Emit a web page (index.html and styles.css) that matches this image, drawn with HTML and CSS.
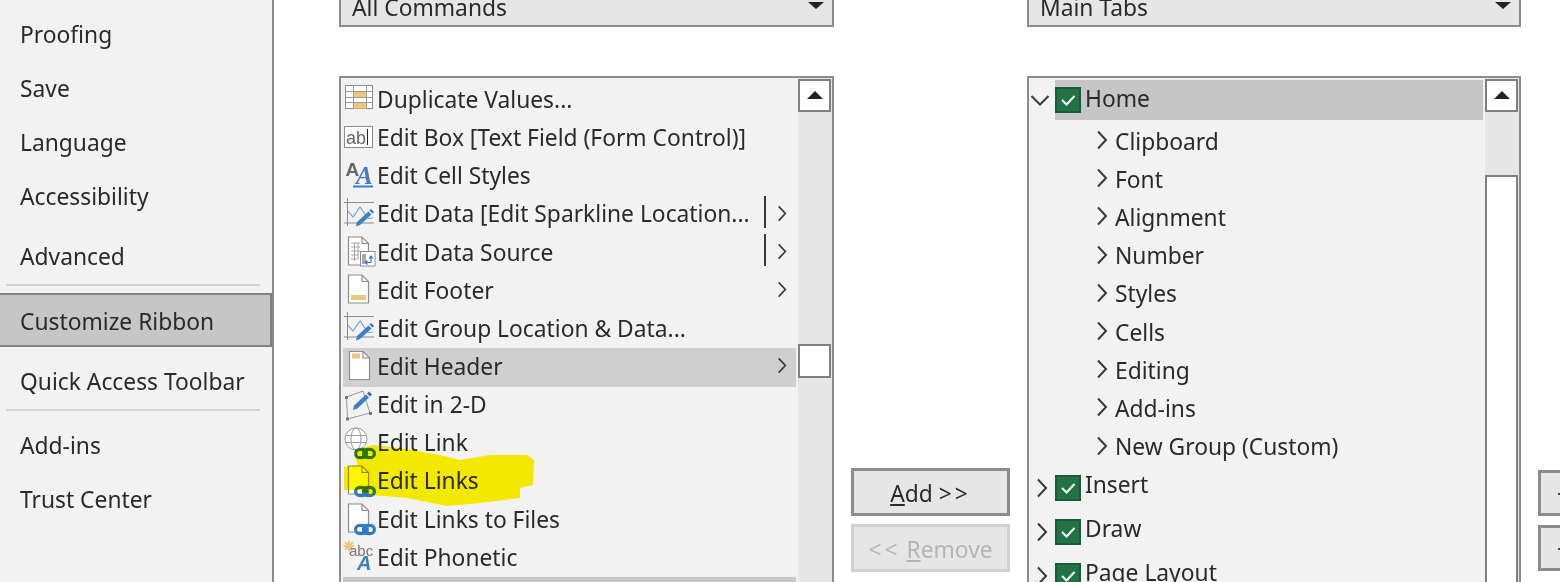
FILE: index.html
```html
<!DOCTYPE html>
<html lang="en">
<head>
<meta charset="utf-8">
<title>Customize Ribbon</title>
<link rel="stylesheet" href="styles.css">
</head>
<body>
<svg class="defs" width="0" height="0" aria-hidden="true">
  <defs>
    <symbol id="chev-r" viewBox="0 0 12 20"><path d="M2 1.500 10 10 2 18.500" fill="none" stroke="#3a3a3a" stroke-width="2"/></symbol>
    <symbol id="chev-d" viewBox="0 0 20 12"><path d="M1.500 2 10 10.500 18.500 2" fill="none" stroke="#3a3a3a" stroke-width="2"/></symbol>
    <symbol id="check" viewBox="0 0 26 26"><rect x="1" y="1" width="24" height="24" fill="#217346" stroke="#185c37" stroke-width="2"/><path d="M7 13 11.500 17.500 19.500 9" fill="none" stroke="#fff" stroke-width="2"/></symbol>
    <symbol id="page" viewBox="0 0 32 38"><path d="M4.500 3H18L24.500 9.500V31H4.500Z" fill="#fff" stroke="#8c8c8c" stroke-width="1.200"/><path d="M18 3V9.500H24.500" fill="none" stroke="#8c8c8c" stroke-width="1.200"/></symbol>
    <symbol id="spark" viewBox="0 0 32 38"><path d="M3.500 2V30M0 6.500H30M0 27H30" stroke="#8a8a8a" stroke-width="1" fill="none"/><path d="M3.500 14.500 9 21 16 11 24 22.500 29 22" fill="none" stroke="#6fa0d4" stroke-width="1.100"/><path d="M12 30.500 13 26 24.500 15.500 27.500 18.500 16 29Z" fill="#3f7fc1"/><path d="M25.500 14.500 27 13 30 16 28.500 17.500Z" fill="#2f6fb5"/></symbol>
    <symbol id="chain" viewBox="0 0 22 12"><rect x="1.600" y="1.800" width="11" height="8.400" rx="4.200" fill="none" stroke="#2f7ac4" stroke-width="3.200"/><rect x="9.400" y="1.800" width="11" height="8.400" rx="4.200" fill="none" stroke="#2f7ac4" stroke-width="3.200"/></symbol>
  </defs>
</svg>
<div class="app">
  <nav class="sidebar">
    <div class="nav-item">Proofing</div>
    <div class="nav-item">Save</div>
    <div class="nav-item">Language</div>
    <div class="nav-item">Accessibility</div>
    <div class="nav-item nav-gap">Advanced</div>
    <div class="nav-sep"></div>
    <div class="nav-item nav-selected">Customize Ribbon</div>
    <div class="nav-item">Quick Access Toolbar</div>
    <div class="nav-sep nav-sep-tight"></div>
    <div class="nav-item">Add-ins</div>
    <div class="nav-item">Trust Center</div>
  </nav>
  <main class="main">
    <div class="dropdown"><span>All Commands</span><i class="tri-down"></i></div>
    <div></div>
    <div class="dropdown dropdown-right"><span>Main Tabs</span><i class="tri-down"></i></div>
    <div></div>

    <section class="panel">
      <div class="rows">
        <div class="row"><svg class="ico" viewBox="0 0 32 38"><rect x="1.500" y="4.500" width="27" height="23" fill="#fff" stroke="#8c8c8c"/><rect x="9.500" y="11" width="13" height="5.500" fill="#ecc67c"/><rect x="9.500" y="22" width="13" height="5.500" fill="#ecc67c"/><path d="M1.500 10.500H28.500M1.500 16.500H28.500M1.500 21.500H28.500M9.500 4.500V27.500M22.500 4.500V27.500" stroke="#9a9a9a" fill="none"/></svg><span class="label">Duplicate Values...</span></div>
        <div class="row"><svg class="ico" viewBox="0 0 32 38"><rect x="0.500" y="6.500" width="28" height="21" fill="#fff" stroke="#8c8c8c"/><text x="2" y="23.500" class="ico-ab">ab</text><path d="M23.500 9V25" stroke="#222" stroke-width="1"/></svg><span class="label">Edit Box [Text Field (Form Control)]</span></div>
        <div class="row"><svg class="ico" viewBox="0 0 32 38"><text x="1.500" y="17.500" class="ico-a">A</text><text x="12" y="26" class="ico-a-blue">A</text><path d="M9 28.500H29" stroke="#3f7fc1" stroke-width="2"/></svg><span class="label">Edit Cell Styles</span></div>
        <div class="row"><svg class="ico" viewBox="0 0 32 38"><use href="#spark" width="32" height="38"/></svg><span class="label label-cut">Edit Data [Edit Sparkline Location...</span><i class="split"></i><svg class="sub"><use href="#chev-r"/></svg></div>
        <div class="row"><svg class="ico" viewBox="0 0 32 38"><use href="#page" width="32" height="38"/><path d="M7 9H16M7 13H16M7 17H16M7 21H14M7 25H14M10.500 9V27M14 9V25" stroke="#a5a5a5" fill="none"/><rect x="16.500" y="17.500" width="14.500" height="14.500" fill="#fff" stroke="#8c8c8c"/><rect x="18" y="20" width="4" height="10" fill="#a9a9a9"/><path d="M21.500 28.500H27V22.500M25 24.500 27 22 29 24.500M23.500 26.500 21.500 28.500 23.500 30.500" stroke="#2f7ac4" stroke-width="1.200" fill="none"/></svg><span class="label">Edit Data Source</span><i class="split"></i><svg class="sub"><use href="#chev-r"/></svg></div>
        <div class="row"><svg class="ico" viewBox="0 0 32 38"><use href="#page" width="32" height="38"/><rect x="7" y="23" width="15" height="5" fill="#ecc67c"/></svg><span class="label">Edit Footer</span><svg class="sub"><use href="#chev-r"/></svg></div>
        <div class="row"><svg class="ico" viewBox="0 0 32 38"><use href="#spark" width="32" height="38"/></svg><span class="label">Edit Group Location &amp; Data...</span></div>
        <div class="row row-hover"><svg class="ico" viewBox="0 0 32 38"><use href="#page" x="1" y="0.500" width="32" height="38"/><rect x="8" y="5.500" width="8" height="5" fill="#ecc67c"/></svg><span class="label">Edit Header</span><svg class="sub"><use href="#chev-r"/></svg></div>
        <div class="row"><svg class="ico" viewBox="0 0 32 38"><path d="M2.500 10 19 4 26 26 3.500 32Z" fill="none" stroke="#9a9a9a" stroke-width="1"/><rect x="1" y="9" width="3" height="3" fill="#777"/><rect x="2" y="30.500" width="3" height="3" fill="#777"/><rect x="25" y="25" width="3" height="3" fill="#777"/><path d="M9 23 10 18.500 22 7.500 25 10.500 13.500 21.500Z" fill="#3f7fc1"/><path d="M23 6.500 25 4.500 28 7.500 26 9.500Z" fill="#2f6fb5"/></svg><span class="label">Edit in 2-D</span></div>
        <div class="row"><svg class="ico" viewBox="0 0 32 38"><circle cx="12" cy="14" r="11" fill="#fff" stroke="#9a9a9a" stroke-width="1"/><ellipse cx="12" cy="14" rx="5" ry="11" fill="none" stroke="#9a9a9a"/><path d="M1.500 10.500H22.500M1.500 17.500H22.500" stroke="#9a9a9a" fill="none"/><use href="#chain" x="10" y="22.500" width="22" height="12"/></svg><span class="label">Edit Link</span></div>
        <div class="row"><svg class="ico" viewBox="0 0 32 38"><use href="#page" width="32" height="38"/><use href="#chain" x="10" y="22.500" width="22" height="12"/></svg><span class="label">Edit Links</span></div>
        <div class="row"><svg class="ico" viewBox="0 0 32 38"><use href="#page" width="32" height="38"/><use href="#chain" x="10" y="22.500" width="22" height="12"/></svg><span class="label">Edit Links to Files</span></div>
        <div class="row"><svg class="ico" viewBox="0 0 32 38"><path d="M5 1.500V12.500M-0.500 7H10.500M1 3 9 11M9 3 1 11" stroke="#ecc67c" stroke-width="1.800" fill="none"/><text x="5" y="17" class="ico-abc">abc</text><text x="13" y="31" class="ico-a-big">A</text></svg><span class="label">Edit Phonetic</span></div>
        <div class="row row-selected"></div>
      </div>
      <div class="scroll">
        <div class="scroll-btn"><i class="tri-up"></i></div>
        <div class="scroll-thumb scroll-thumb-left"></div>
      </div>
    </section>

    <div class="mid">
      <button class="btn" type="button"><u>A</u>dd <span class="arrows">&gt;&gt;</span></button>
      <button class="btn btn-off" type="button"><span class="arrows">&lt;&lt;</span> <u>R</u>emove</button>
    </div>

    <section class="panel panel-right">
      <div class="tree">
        <div class="tree-top tree-home"><svg class="chev-down"><use href="#chev-d"/></svg><div class="home-bar"><svg class="box"><use href="#check"/></svg><span class="tree-text tree-text-home">Home</span></div></div>
        <div class="tree-kids">
          <div class="kid"><svg class="kid-chev"><use href="#chev-r"/></svg>Clipboard</div>
          <div class="kid"><svg class="kid-chev"><use href="#chev-r"/></svg>Font</div>
          <div class="kid"><svg class="kid-chev"><use href="#chev-r"/></svg>Alignment</div>
          <div class="kid"><svg class="kid-chev"><use href="#chev-r"/></svg>Number</div>
          <div class="kid"><svg class="kid-chev"><use href="#chev-r"/></svg>Styles</div>
          <div class="kid"><svg class="kid-chev"><use href="#chev-r"/></svg>Cells</div>
          <div class="kid"><svg class="kid-chev"><use href="#chev-r"/></svg>Editing</div>
          <div class="kid"><svg class="kid-chev"><use href="#chev-r"/></svg>Add-ins</div>
          <div class="kid"><svg class="kid-chev"><use href="#chev-r"/></svg>New Group (Custom)</div>
        </div>
        <div class="tree-top"><svg class="top-chev"><use href="#chev-r"/></svg><svg class="box"><use href="#check"/></svg><span class="tree-text">Insert</span></div>
        <div class="tree-top"><svg class="top-chev"><use href="#chev-r"/></svg><svg class="box"><use href="#check"/></svg><span class="tree-text">Draw</span></div>
        <div class="tree-top"><svg class="top-chev"><use href="#chev-r"/></svg><svg class="box"><use href="#check"/></svg><span class="tree-text">Page Layout</span></div>
      </div>
      <div class="scroll">
        <div class="scroll-btn"><i class="tri-up"></i></div>
        <div class="scroll-thumb scroll-thumb-right"></div>
      </div>
    </section>

    <div class="side-btns">
      <div class="mini-btn"><i class="tick"></i></div>
      <div class="mini-btn"><i class="tick"></i></div>
    </div>
  </main>
</div>
<svg class="marker" viewBox="0 0 1560 582" aria-hidden="true">
  <path d="M355 450 373 445 400 448 440 455 460 460 490 455 527 455 534 460 533 485 520 488 520 498 480 503 447 506 407 498 373 495 357 490 344 490 344 467 358 465 355 457Z" fill="#fff500"/>
</svg>
</body>
</html>
```
FILE: styles.css
```css
* { box-sizing: border-box; }
html, body { margin: 0; height: 582px; overflow: hidden; background: #fff; }
body {
  font-family: "Noto Sans", "Open Sans", "Liberation Sans", sans-serif;
  font-size: 22.8px;
  color: #2a2a2a;
  position: relative;
}
.defs { position: absolute; }
.app { display: flex; height: 582px; overflow: hidden; }

.sidebar {
  flex: 0 0 274px;
  background: #f2f2f2;
  border-right: 2px solid #8c8c8c;
  padding-top: 8px;
}
.nav-item {
  height: 54px;
  display: flex;
  align-items: center;
  padding: 0 0 1px 20px;
  white-space: nowrap;
}
.nav-gap { margin-top: 6px; }
.nav-sep { height: 2px; margin: 0 12px 7px 6px; background: #d2d2d2; }
.nav-sep-tight { margin-bottom: 8px; }
.nav-selected {
  height: 54px;
  margin-bottom: 8px;
  padding: 2px 0 0 20px;
  background: #c6c6c6;
  border-top: 2px solid #808080;
  border-bottom: 2px solid #808080;
  border-right: 2px solid #808080;
}

.main {
  flex: 1;
  min-width: 0;
  padding-left: 65px;
  display: grid;
  grid-template-columns: 495px 159px 494px 40px;
  grid-template-rows: 27px 600px;
  column-gap: 17px;
  row-gap: 49px;
  overflow: hidden;
}

.dropdown {
  height: 27px;
  background: #e6e6e6;
  border: 2px solid #8c8c8c;
  border-top: 0;
  display: flex;
  align-items: flex-end;
  justify-content: space-between;
  padding: 0 7px 2px 11px;
  line-height: 27px;
  overflow: hidden;
  position: relative;
}
.dropdown span { display: block; transform: translateY(-2px); }
.dropdown-right { padding-left: 11px; }
.tri-down {
  width: 0; height: 0;
  position: absolute;
  right: 8px; top: 2px;
  border-left: 8px solid transparent;
  border-right: 8px solid transparent;
  border-top: 7px solid #222;
}

.panel {
  height: 520px;
  background: #f2f2f2;
  border: 2px solid #8c8c8c;
  display: flex;
}
.rows { flex: 1; min-width: 0; padding: 3.4px 2px 0; }
.row {
  height: 38.15px;
  display: flex;
  align-items: center;
  position: relative;
  white-space: nowrap;
}
.row-hover { background: #cfcfcf; }
.row-selected { background: #c6c6c6; }
.ico { width: 32px; height: 38px; flex: none; margin-left: 1px; overflow: visible; }
.label { margin-left: 1px; position: relative; top: -1px; }
.split {
  position: absolute;
  left: 421px; top: 0.400px;
  width: 2px; height: 32px;
  background: #3a3a3a;
}
.sub { position: absolute; left: 434px; top: 9px; width: 10px; height: 17px; }
.ico-ab { font: 400 18px "Liberation Sans", sans-serif; fill: #666; }
.ico-a { font: 700 19px "Liberation Sans", sans-serif; fill: #666; }
.ico-a-blue { font: italic 700 25px "Liberation Serif", serif; fill: #3f7fc1; }
.ico-abc { font: 15px "Liberation Sans", sans-serif; fill: #777; }
.ico-a-big { font: italic 700 20px "Liberation Sans", sans-serif; fill: #3f7fc1; }

.scroll { flex: 0 0 34px; background: #e6e6e6; padding-top: 1px; }
.panel-right .scroll { width: 34px; }
.scroll-btn, .scroll-thumb {
  width: 33px;
  height: 33px;
  background: #fff;
  border: 2px solid #808080;
  position: relative;
}
.scroll-thumb-left { height: 34px; margin-top: 232px; }
.scroll-thumb-right { height: 460px; margin-top: 63px; }
.tri-up {
  position: absolute;
  left: 7px; top: 10px;
  width: 0; height: 0;
  border-left: 8px solid transparent;
  border-right: 8px solid transparent;
  border-bottom: 8px solid #222;
}

.mid { padding-top: 392px; display: flex; flex-direction: column; gap: 8px; }
.btn {
  height: 48px;
  width: 159px;
  background: #e6e6e6;
  border: 3px solid #8c8c8c;
  font: inherit;
  color: #2a2a2a;
  padding: 2px 0 0;
}
.btn-off { border-color: #d0d0d0; color: #b5b5b5; }
.arrows { letter-spacing: 3px; }

.tree { flex: 1; min-width: 0; padding-top: 2px; }
.tree-top {
  height: 44px;
  display: flex;
  align-items: center;
}
.tree-home { height: 40px; }
.chev-down { width: 20px; height: 12px; margin-left: 1px; margin-right: 5px; flex: none; }
.home-bar {
  flex: 1;
  height: 40px;
  margin-right: 2px;
  background: #c6c6c6;
  display: flex;
  align-items: center;
}
.top-chev { width: 12px; height: 20px; margin-left: 7px; margin-right: 7px; flex: none; }
.box { width: 26px; height: 26px; flex: none; }
.tree-text { margin-left: 4px; position: relative; top: -3px; }
.tree-text-home { top: -2px; }
.tree-kids { margin-top: 2px; }
.kid { height: 38.2px; display: flex; align-items: center; padding-left: 67px; white-space: nowrap; }
.kid-chev { width: 12px; height: 20px; margin-right: 7px; flex: none; position: relative; top: -1px; }

.side-btns { padding-top: 394px; display: flex; flex-direction: column; gap: 9px; }
.mini-btn {
  height: 46px;
  width: 60px;
  background: #e6e6e6;
  border: 3px solid #8c8c8c;
  position: relative;
}
.tick { position: absolute; left: 17px; top: 20px; width: 3px; height: 2px; background: #444; }

.marker {
  position: absolute;
  left: 0; top: 0;
  width: 1560px; height: 582px;
  mix-blend-mode: multiply;
  pointer-events: none;
}
```
